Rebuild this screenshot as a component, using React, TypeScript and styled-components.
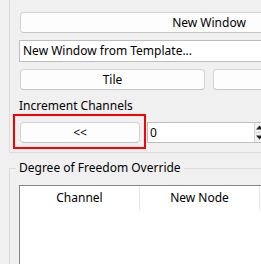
import React from 'react'
import styled, { createGlobalStyle } from 'styled-components'

const GlobalStyle = createGlobalStyle`
  html, body {
    margin: 0;
    padding: 0;
    background: #f0f0f0;
    overflow: hidden;
  }
  body {
    font-family: "Noto Sans", "Open Sans", sans-serif;
    font-size: 12px;
    color: #000;
  }
`

const Page = styled.div`
  width: 420px;
  padding-left: 9px;
`

const Group = styled.div`
  border: 1px solid #dcdcdc;
  border-top: none;
  padding: 0 9px 9px;
  display: flex;
  flex-direction: column;
  align-items: flex-start;
  position: relative;
`

const PushButton = styled.button<{ $width: number }>`
  box-sizing: border-box;
  height: 21px;
  width: ${p => p.$width}px;
  margin: 0 1px;
  padding: 0;
  background: #fdfdfd;
  border: 1px solid #d3d3d3;
  border-bottom-color: #c4c4c4;
  border-radius: 4px;
  font: inherit;
  color: #000;
  line-height: 19px;
  text-align: center;
`

const WideButton = styled(PushButton)`
  margin-top: 12px;
`

const Combo = styled.div`
  box-sizing: border-box;
  margin-top: 7px;
  width: 380px;
  height: 22px;
  background: #fff;
  border: 1px solid #bdbdbd;
  padding-left: 3px;
  line-height: 20px;
`

const Row = styled.div<{ $top: number; $gap: number }>`
  display: flex;
  align-items: flex-start;
  margin-top: ${p => p.$top}px;
  gap: ${p => p.$gap}px;
`

const Label = styled.div`
  margin-top: 8px;
  height: 16px;
  line-height: 16px;
`

const Highlight = styled.div`
  position: absolute;
  left: 3px;
  top: 114px;
  width: 133px;
  height: 35px;
  box-sizing: border-box;
  border: 2px solid #ff0000;
  pointer-events: none;
`

const SpinBox = styled.div`
  box-sizing: border-box;
  height: 21px;
  width: 124px;
  background: #fff;
  border: 1px solid #bdbdbd;
  display: flex;
`

const SpinText = styled.div`
  flex: 1;
  padding-left: 2px;
  line-height: 19px;
`

const SpinArrows = styled.div`
  width: 15px;
  display: flex;
  flex-direction: column;
  border-left: 1px solid #d8d8d8;
`

const SpinArrow = styled.div`
  flex: 1;
  display: flex;
  align-items: center;
  justify-content: flex-start;
  padding-left: 1px;
  background: #f2f2f2;
  border-bottom: 1px solid #d8d8d8;
  &:last-child {
    border-bottom: none;
  }
`

const Fieldset = styled.fieldset`
  margin: 7px 0 0;
  padding: 0 9px;
  border: 1px solid #dcdcdc;
  min-width: 0;
  height: 140px;
`

const Legend = styled.legend`
  margin-left: -3px;
  padding: 0 3px;
  line-height: 16px;
`

const Table = styled.div`
  margin-top: 9px;
  height: 100px;
  background: #fff;
  border: 1px solid #828790;
`

const Header = styled.div`
  display: flex;
  height: 24px;
`

const HeaderCell = styled.div`
  width: 119px;
  flex: none;
  border-right: 1px solid #e5e5e5;
  text-align: center;
  line-height: 24px;
`

const Arrow = ({ up }: { up?: boolean }) => (
  <svg width="7" height="5" viewBox="0 0 7 5">
    <path d={up ? 'M0 4.5 L3.5 0.5 L7 4.5 Z' : 'M0 0.5 L3.5 4.5 L7 0.5 Z'} fill="#222" />
  </svg>
)

export default function App() {
  return (
    <>
      <GlobalStyle />
      <Page>
        <Group>
          <WideButton $width={378}>New Window</WideButton>
          <Combo>New Window from Template...</Combo>
          <Row $top={7} $gap={6}>
            <PushButton $width={185}>Tile</PushButton>
            <PushButton $width={185} />
          </Row>
          <Label>Increment Channels</Label>
          <Row $top={8} $gap={6}>
            <PushButton $width={120}>&lt;&lt;</PushButton>
            <SpinBox>
              <SpinText>0</SpinText>
              <SpinArrows>
                <SpinArrow><Arrow up /></SpinArrow>
                <SpinArrow><Arrow /></SpinArrow>
              </SpinArrows>
            </SpinBox>
          </Row>
          <Highlight />
        </Group>
        <Fieldset>
          <Legend>Degree of Freedom Override</Legend>
          <Table>
            <Header>
              <HeaderCell>Channel</HeaderCell>
              <HeaderCell>New Node</HeaderCell>
              <HeaderCell />
            </Header>
          </Table>
        </Fieldset>
      </Page>
    </>
  )
}
